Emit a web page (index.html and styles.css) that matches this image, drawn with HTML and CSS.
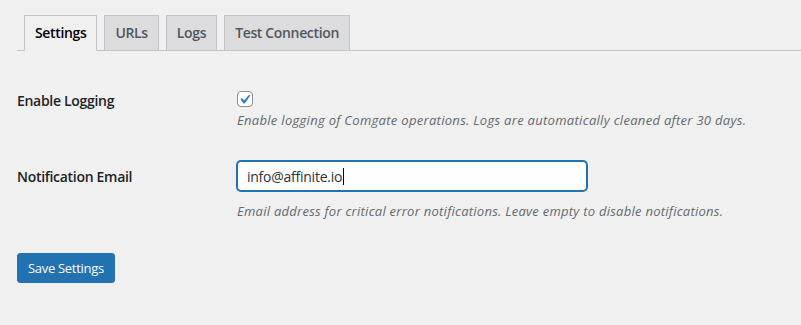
FILE: index.html
```html
<!DOCTYPE html>
<html lang="en">
<head>
  <meta charset="UTF-8">
  <meta name="viewport" content="width=device-width, initial-scale=1.0">
  <title>Comgate Settings</title>
  <link rel="stylesheet" href="styles.css">
</head>
<body>

  <div class="wrap">
    <nav class="nav-tabs">
      <a href="#" class="nav-tab active">Settings</a>
      <a href="#" class="nav-tab">URLs</a>
      <a href="#" class="nav-tab">Logs</a>
      <a href="#" class="nav-tab">Test Connection</a>
    </nav>

    <form class="settings-form">
      <div class="form-row row-logging">
        <div class="form-label">Enable Logging</div>
        <div class="form-field">
          <label class="check">
            <span class="check-box">
              <svg viewBox="0 0 20 20" width="20" height="20"><path d="M14.83 4.89l1.34.94-5.81 8.38H9.02L5.78 9.67l1.34-1.25 2.57 2.4z"/></svg>
            </span>
          </label>
          <p class="description desc-check">Enable logging of Comgate operations. Logs are automatically cleaned after 30 days.</p>
        </div>
      </div>

      <div class="form-row row-email">
        <div class="form-label">Notification Email</div>
        <div class="form-field">
          <div class="text-input">info@affinite.io<span class="caret"></span></div>
          <p class="description desc-email">Email address for critical error notifications. Leave empty to disable notifications.</p>
        </div>
      </div>

      <div class="submit">
        <button type="button" class="button-primary">Save Settings</button>
      </div>
    </form>
  </div>

</body>
</html>
```

FILE: styles.css
```css
* {
    margin: 0;
    padding: 0;
    box-sizing: border-box;
    }

    body {
    font-family: "Open Sans", "Noto Sans", sans-serif;
    font-size: 13px;
    font-variant-ligatures: none;
    color: #3c434a;
    background-color: #f0f0f1;
    }

    .wrap {
    padding: 15px 0 0 17px;
    }

    /* Tabs */
    .nav-tabs {
    display: flex;
    border-bottom: 1px solid #c3c4c7;
    }

    .nav-tab {
    margin-left: 7px;
    margin-bottom: -1px;
    padding: 5px 10px;
    font-size: 14px;
    font-weight: 600;
    line-height: 24px;
    letter-spacing: -0.35px;
    color: #50575e;
    background-color: #dcdcde;
    border: 1px solid #c3c4c7;
    text-decoration: none;
    }

    .nav-tab.active {
    color: #000;
    background-color: #f0f0f1;
    border-bottom-color: #f0f0f1;
    }

    /* Form rows */
    .form-row {
    display: grid;
    grid-template-columns: 220px 1fr;
    }

    .row-logging {
    padding-top: 21px;
    }

    .row-email {
    padding-top: 18px;
    }

    .form-label {
    padding-top: 20px;
    font-size: 14px;
    font-weight: 600;
    line-height: 18px;
    letter-spacing: -0.3px;
    color: #1d2327;
    }

    .row-logging .form-field {
    padding-top: 19px;
    }

    .row-email .form-field {
    padding-top: 13px;
    }

    .check {
    display: block;
    height: 16px;
    }

    .check-box {
    display: flex;
    align-items: center;
    justify-content: center;
    width: 16px;
    height: 16px;
    background: #fff;
    border: 1px solid #8c8f94;
    border-radius: 4px;
    }

    .check-box svg {
    width: 19px;
    height: 19px;
    fill: #3582c4;
    flex-shrink: 0;
    margin-left: -1px;
    }

    .description {
    font-size: 13px;
    font-style: italic;
    line-height: 19px;
    letter-spacing: 0.3px;
    color: #646970;
    }

    .desc-check {
    margin-top: 4px;
    }

    .desc-email {
    margin-top: 11px;
    letter-spacing: 0.26px;
    }

    .text-input {
    display: flex;
    align-items: center;
    width: 350px;
    height: 30px;
    padding: 0 9px;
    font-size: 14px;
    letter-spacing: -0.25px;
    color: #2c3338;
    background: #fff;
    border: 1px solid #2271b1;
    border-radius: 4px;
    box-shadow: 0 0 0 1px #2271b1;
    }

    .caret {
    width: 1px;
    height: 17px;
    margin-left: 1px;
    background: #000;
    }

    /* Submit */
    .submit {
    padding-top: 32px;
    }

    .button-primary {
    height: 30px;
    padding: 0 10px;
    font-family: inherit;
    font-size: 13px;
    letter-spacing: -0.3px;
    color: #fff;
    background-color: #2271b1;
    border: 1px solid #2271b1;
    border-radius: 3px;
    cursor: pointer;
    }
```
